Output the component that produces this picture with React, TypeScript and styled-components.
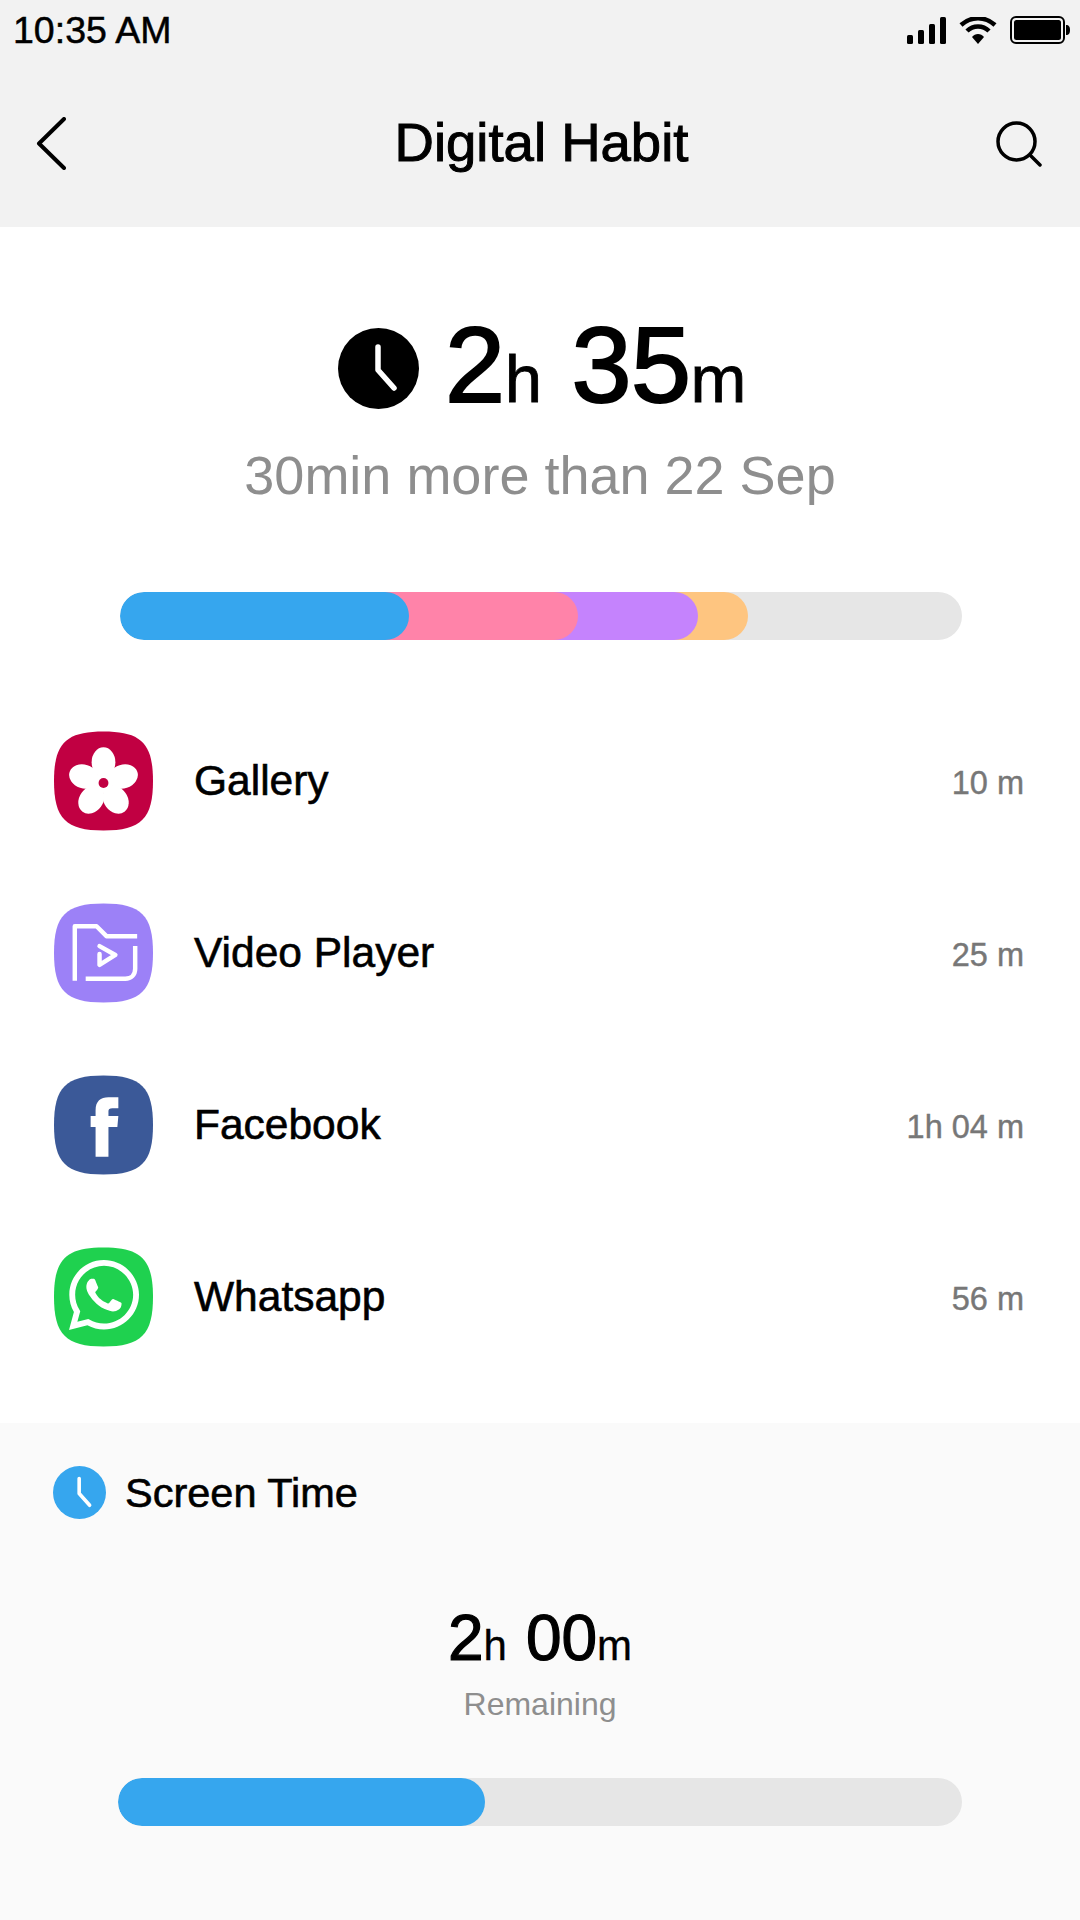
import styled, { createGlobalStyle } from 'styled-components'
import { FaWhatsapp } from 'react-icons/fa'

const GlobalStyle = createGlobalStyle`
  html, body {
    margin: 0;
    padding: 0;
    background: #fff;
    font-family: 'Liberation Sans', Arial, sans-serif;
  }
`

const Page = styled.div`
  width: 1080px;
  height: 1920px;
  display: flex;
  flex-direction: column;
  overflow: hidden;
  color: #000;
`

const TopArea = styled.header`
  height: 227px;
  background: #f2f2f2;
  display: flex;
  flex-direction: column;
`

const StatusBar = styled.div`
  height: 60px;
  display: flex;
  align-items: center;
  justify-content: space-between;
  padding: 0 10px 0 13px;
`

const Clock = styled.span`
  font-size: 37.5px;
  line-height: 60px;
  -webkit-text-stroke: 0.5px #000;
`

const StatusIcons = styled.div`
  display: flex;
  align-items: center;
  gap: 13px;
`

const NavBar = styled.nav`
  height: 167px;
  box-sizing: border-box;
  padding: 0 38px 0 36px;
  display: flex;
  align-items: center;
  justify-content: space-between;
`

const Title = styled.h1`
  margin: 0 0 2px 21px;
  font-size: 54.5px;
  font-weight: 400;
  -webkit-text-stroke: 1px #000;
`

const Hero = styled.section`
  display: flex;
  flex-direction: column;
  align-items: center;
  padding-top: 88px;
`

const HeroTime = styled.div`
  display: flex;
  align-items: center;
  height: 106px;
  gap: 26px;
  margin-left: 4px;
`

const BigTime = styled.div`
  font-size: 108px;
  line-height: 106px;
  letter-spacing: -0.5px;
  padding-top: 8px;
  -webkit-text-stroke: 2px #000;
`

const BigUnit = styled.span`
  font-size: 67px;
  -webkit-text-stroke: 0.8px #000;
`

const BigGap = styled.span`
  display: inline-block;
  width: 30px;
`

const HeroNote = styled.p`
  margin: 22px 0 0;
  font-size: 54px;
  line-height: 64px;
  color: #8e8e8e;
`

const Track = styled.div<{ $left: number }>`
  margin: 0 118px 0 ${p => p.$left}px;
  height: 48px;
  border-radius: 24px;
  background: #e6e6e6;
  display: flex;
  overflow: hidden;
`

const Segment = styled.div<{ $width: number; $color: string; $layer: number }>`
  position: relative;
  z-index: ${p => p.$layer};
  width: ${p => p.$width}px;
  height: 48px;
  flex: none;
  border-radius: 24px;
  background: ${p => p.$color};
  & + & {
    margin-left: -48px;
  }
`

const UsageBar = styled.div`
  margin-top: 85px;
`

const AppList = styled.ul`
  list-style: none;
  margin: 91px 0 0;
  padding: 0 56px 0 54px;
  display: flex;
  flex-direction: column;
  gap: 72px;
`

const AppRow = styled.li`
  height: 100px;
  display: flex;
  align-items: center;
`

const AppIcon = styled.svg`
  width: 99px;
  height: 100px;
  flex: none;
`

const AppName = styled.span`
  margin-left: 41px;
  font-size: 42.5px;
  flex: 1;
  -webkit-text-stroke: 0.6px #000;
`

const AppTime = styled.span`
  font-size: 32.5px;
  color: #777;
  margin-top: 4px;
  -webkit-text-stroke: 0.4px #777;
`

const WhatsappGlyph = styled.div`
  width: 99px;
  height: 100px;
  flex: none;
  position: relative;
  svg {
    position: absolute;
    inset: 0;
  }
  svg + svg {
    top: 8px;
    left: 10px;
    width: 80px;
    height: 80px;
  }
`

const ScreenTime = styled.section`
  flex: 1;
  margin-top: 76px;
  background: #fafafa;
  display: flex;
  flex-direction: column;
`

const SectionHead = styled.div`
  display: flex;
  align-items: center;
  gap: 19px;
  padding: 43px 0 0 53px;
  height: 53px;
`

const SectionTitle = styled.h2`
  margin: 0;
  font-size: 41.5px;
  font-weight: 400;
  -webkit-text-stroke: 0.6px #000;
`

const Remaining = styled.div`
  display: flex;
  flex-direction: column;
  align-items: center;
  margin-top: 82px;
`

const MidTime = styled.div`
  font-size: 64px;
  line-height: 74px;
  -webkit-text-stroke: 1.2px #000;
`

const MidUnit = styled.span`
  font-size: 42px;
  -webkit-text-stroke: 0.3px #000;
`

const MidGap = styled.span`
  display: inline-block;
  width: 19px;
`

const RemainingLabel = styled.div`
  margin-top: 2px;
  font-size: 32px;
  line-height: 38px;
  color: #8e8e8e;
`

const QuotaBar = styled.div`
  margin-top: 55px;
`

const Squircle = ({ fill }: { fill: string }) => (
  <path fill={fill} d="M50 0C88 0 100 12 100 50C100 88 88 100 50 100C12 100 0 88 0 50C0 12 12 0 50 0Z" />
)

const ClockIcon = ({ size, fill }: { size: number; fill: string }) => (
  <svg width={size} height={size} viewBox="0 0 81 81">
    <circle cx="40.5" cy="40.5" r="40.5" fill={fill} />
    <path d="M40 19V42L56 60" fill="none" stroke="#fff" strokeWidth="5.5" strokeLinecap="round" strokeLinejoin="round" />
  </svg>
)

const apps = [
  { name: 'Gallery', time: '10 m' },
  { name: 'Video Player', time: '25 m' },
  { name: 'Facebook', time: '1h 04 m' },
  { name: 'Whatsapp', time: '56 m' },
]

const GalleryIcon = () => (
  <AppIcon viewBox="0 0 100 100">
    <Squircle fill="#c10042" />
    {[0, 72, 144, 216, 288].map(a => (
      <ellipse key={a} cx="50" cy="31" rx="12" ry="15" fill="#fff" transform={`rotate(${a} 50 52)`} />
    ))}
    <circle cx="50" cy="52" r="10" fill="#fff" />
    <circle cx="50" cy="52" r="5" fill="#c10042" />
  </AppIcon>
)

const VideoIcon = () => (
  <AppIcon viewBox="0 0 100 100">
    <Squircle fill="#9c81f7" />
    <g fill="none" stroke="#fff" strokeWidth="4.5" strokeLinejoin="round">
      <path d="M21 78V23H43L53 33H84" />
      <path d="M82 43V66C82 72 78 76 72 76H32" />
      <path d="M46 43L62 52L46 62V51" strokeLinecap="round" />
    </g>
  </AppIcon>
)

const FacebookIcon = () => (
  <AppIcon viewBox="0 0 100 100">
    <Squircle fill="#3b5998" />
    <path fill="#fff" d="M42 82V52H37V41H42V35C42 26 47 22 55 22H65V33H59C56 33 55 34 55 36V41H65L64 52H55V82Z" />
  </AppIcon>
)

const WhatsappIcon = () => (
  <WhatsappGlyph>
    <AppIcon viewBox="0 0 100 100">
      <Squircle fill="#1fd14f" />
    </AppIcon>
    <FaWhatsapp color="#fff" />
  </WhatsappGlyph>
)

const icons = [<GalleryIcon />, <VideoIcon />, <FacebookIcon />, <WhatsappIcon />]

export default function App() {
  return (
    <Page>
      <GlobalStyle />
      <TopArea>
        <StatusBar>
          <Clock>10:35 AM</Clock>
          <StatusIcons>
            <svg width="39" height="27" viewBox="0 0 39 27">
              <rect x="0" y="18" width="6" height="9" rx="1.5" />
              <rect x="11" y="13" width="6" height="14" rx="1.5" />
              <rect x="22" y="7" width="6" height="20" rx="1.5" />
              <rect x="33" y="0" width="6" height="27" rx="1.5" />
            </svg>
            <svg width="38" height="27" viewBox="0 0 38 27">
              <path d="M2 8C12 -1 26 -1 36 8" fill="none" stroke="#000" strokeWidth="4.5" />
              <path d="M8 14C14 8 24 8 30 14" fill="none" stroke="#000" strokeWidth="4.5" />
              <path d="M13 20C16 16 22 16 25 20L19 27Z" />
            </svg>
            <svg width="60" height="28" viewBox="0 0 60 28">
              <rect x="1" y="1" width="53" height="26" rx="5" fill="none" stroke="#000" strokeWidth="2" />
              <rect x="4" y="4" width="47" height="20" rx="2.5" />
              <path d="M56 9C59 9 60 11 60 14C60 17 59 19 56 19Z" />
            </svg>
          </StatusIcons>
        </StatusBar>
        <NavBar>
          <svg width="30" height="53" viewBox="0 0 30 53">
            <path d="M28 2L3 26.5L28 51" fill="none" stroke="#000" strokeWidth="4" strokeLinecap="round" strokeLinejoin="round" />
          </svg>
          <Title>Digital Habit</Title>
          <svg width="46" height="46" viewBox="0 0 46 46">
            <circle cx="20.5" cy="20.5" r="18.5" fill="none" stroke="#000" strokeWidth="3.5" />
            <path d="M34 34L44 44" stroke="#000" strokeWidth="3.5" strokeLinecap="round" />
          </svg>
        </NavBar>
      </TopArea>

      <Hero>
        <HeroTime>
          <ClockIcon size={81} fill="#000" />
          <BigTime>
            2<BigUnit>h</BigUnit>
            <BigGap />
            35<BigUnit>m</BigUnit>
          </BigTime>
        </HeroTime>
        <HeroNote>30min more than 22 Sep</HeroNote>
      </Hero>

      <UsageBar>
        <Track $left={120}>
          <Segment $width={289} $color="#36a6ee" $layer={4} />
          <Segment $width={217} $color="#ff83a9" $layer={3} />
          <Segment $width={168} $color="#c583fd" $layer={2} />
          <Segment $width={98} $color="#fec580" $layer={1} />
        </Track>
      </UsageBar>

      <AppList>
        {apps.map((app, i) => (
          <AppRow key={app.name}>
            {icons[i]}
            <AppName>{app.name}</AppName>
            <AppTime>{app.time}</AppTime>
          </AppRow>
        ))}
      </AppList>

      <ScreenTime>
        <SectionHead>
          <ClockIcon size={53} fill="#36a6ee" />
          <SectionTitle>Screen Time</SectionTitle>
        </SectionHead>
        <Remaining>
          <MidTime>
            2<MidUnit>h</MidUnit>
            <MidGap />
            00<MidUnit>m</MidUnit>
          </MidTime>
          <RemainingLabel>Remaining</RemainingLabel>
        </Remaining>
        <QuotaBar>
          <Track $left={118}>
            <Segment $width={367} $color="#36a6ee" $layer={1} />
          </Track>
        </QuotaBar>
      </ScreenTime>
    </Page>
  )
}
